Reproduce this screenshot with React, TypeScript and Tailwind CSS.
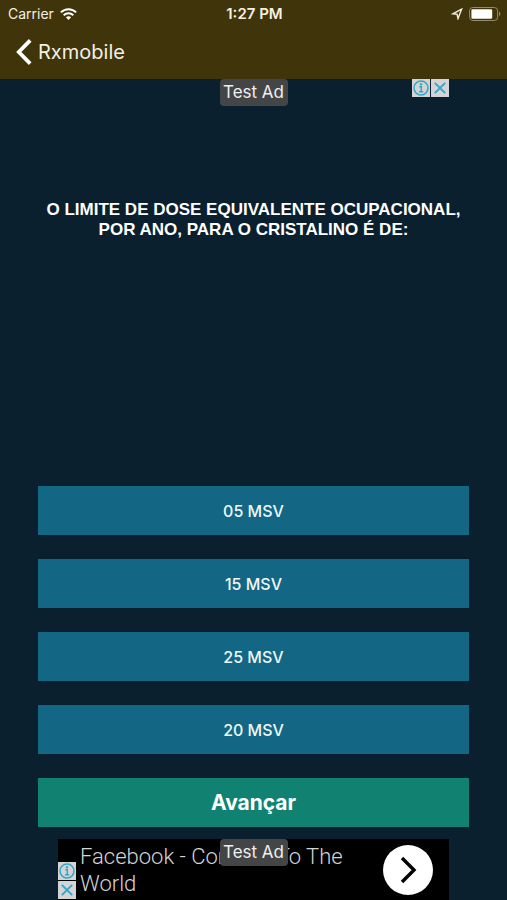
import React from "react";

const options = ["05 MSV", "15 MSV", "25 MSV", "20 MSV"];

function WifiIcon() {
  return (
    <svg viewBox="0 0 17 12" className="h-3 w-[17px]" fill="none" stroke="#fff" strokeWidth="2" aria-hidden="true">
      <path d="M0.9 4.4 C5 0.1 12 0.1 16.1 4.4" />
      <path d="M3.7 7.2 C6.3 4.6 10.7 4.6 13.3 7.2" />
      <path d="M8.5 12 L5.9 9.3 C7.3 7.9 9.7 7.9 11.1 9.3 Z" fill="#fff" stroke="none" />
    </svg>
  );
}

function LocationIcon() {
  return (
    <svg viewBox="0 0 12 12" className="size-3" fill="none" stroke="#f2eedd" strokeWidth="1.4" aria-hidden="true">
      <path d="M10.6 1.2 L1.8 5.8 L6 6.2 L7 10.6 Z" />
    </svg>
  );
}

function BatteryIcon() {
  return (
    <svg viewBox="0 0 32 15" className="h-[15px] w-8" aria-hidden="true">
      <rect x="0.6" y="0.5" width="28" height="13" rx="3.2" fill="none" stroke="#968c6a" strokeWidth="1" />
      <rect x="2.4" y="2.2" width="20.8" height="9.6" rx="1.2" fill="#fff" />
      <path d="M30 4.6 C31.8 5.6 31.8 8.4 30 9.4 Z" fill="#968c6a" />
    </svg>
  );
}

function InfoIcon() {
  return (
    <svg viewBox="0 0 18 18" className="size-[18px] bg-[#d4d4d6]" fill="none" stroke="#35a6c6" aria-hidden="true">
      <circle cx="9" cy="9" r="7" strokeWidth="1.5" />
      <path d="M7.3 7.8 H9.3 V12.6 M7 12.8 H11.2" strokeWidth="1.5" />
      <circle cx="9" cy="5.2" r="1.2" fill="#35a6c6" stroke="none" />
    </svg>
  );
}

function CloseIcon() {
  return (
    <svg viewBox="0 0 18 18" className="size-[18px] bg-[#d4d4d6]" fill="none" stroke="#35a6c6" strokeWidth="1.9" aria-hidden="true">
      <path d="M3.8 3.8 L14.2 14.2 M14.2 3.8 L3.8 14.2" />
    </svg>
  );
}

function AdControls({ className }: { className: string }) {
  return (
    <div className={`absolute flex gap-px ${className}`}>
      <button type="button" aria-label="Ad information"><InfoIcon /></button>
      <button type="button" aria-label="Close ad"><CloseIcon /></button>
    </div>
  );
}

function TestBadge() {
  return (
    <span className="absolute top-0 left-1/2 h-[27px] w-[68px] -translate-x-1/2 rounded-[4px] bg-[#444546] text-center font-[Inter,sans-serif] text-[17px] leading-[27px] whitespace-nowrap text-[#efefef]">
      Test Ad
    </span>
  );
}

export default function App() {
  return (
    <div className="flex min-h-screen flex-col bg-[#0a202e] font-[Inter,sans-serif] text-white">
      <header className="bg-[#3f340a] pb-3">
        <div className="grid h-7 grid-cols-3 items-center pr-1.5 pl-2 text-[#f4f0e2]">
          <div className="flex items-center gap-1.5">
            <span className="text-sm">Carrier</span>
            <WifiIcon />
          </div>
          <span className="text-center text-[15px] font-semibold">1:27 PM</span>
          <div className="flex items-center justify-end gap-1.5">
            <LocationIcon />
            <BatteryIcon />
          </div>
        </div>
        <nav className="flex h-[39px] items-center px-4 pt-2">
          <a href="#" className="flex items-center gap-1.5 text-xl leading-8 text-[#f4f0e2]">
            <svg viewBox="0 0 16 26" className="h-[26px] w-4" fill="none" stroke="#fff" strokeWidth="3.8" aria-hidden="true">
              <path d="M14.2 1.4 L2.8 13 L14.2 24.6" />
            </svg>
            Rxmobile
          </a>
        </nav>
      </header>

      <main className="flex grow flex-col">
        <aside className="relative mx-auto h-[60px] w-[391px]">
          <TestBadge />
          <AdControls className="top-0 right-0" />
        </aside>

        <section className="flex grow flex-col px-[38px]">
          <h1 className="pt-[61px] text-center font-['Liberation_Sans',sans-serif] text-[17px] leading-5 font-bold">
            O LIMITE DE DOSE EQUIVALENTE OCUPACIONAL, POR ANO, PARA O CRISTALINO É DE:
          </h1>
          <div className="mt-auto flex flex-col gap-6 pb-3">
            {options.map((option) => (
              <button key={option} type="button" className="h-[49px] bg-[#136684] text-[16px] font-medium text-[#f0f8fa]">
                {option}
              </button>
            ))}
            <button type="button" className="h-[49px] bg-[#118272] text-[21px] font-bold">
              Avançar
            </button>
          </div>
        </section>

        <aside className="relative mx-auto flex h-[61px] w-[391px] items-center justify-between bg-black pr-4 pl-[22px]">
          <p className="w-[275px] font-[Roboto,sans-serif] text-[22px] leading-[27px] font-light text-[#d4d4d4]">
            Facebook - Connect To The World
          </p>
          <button type="button" aria-label="Open ad" className="flex size-[50px] items-center justify-center rounded-full bg-white">
            <svg viewBox="0 0 18 28" className="h-7 w-[18px]" fill="none" stroke="#000" strokeWidth="3.4" aria-hidden="true">
              <path d="M3 2 L15 14 L3 26" />
            </svg>
          </button>
          <TestBadge />
          <AdControls className="top-[23px] left-0 flex-col" />
        </aside>
      </main>
    </div>
  );
}
